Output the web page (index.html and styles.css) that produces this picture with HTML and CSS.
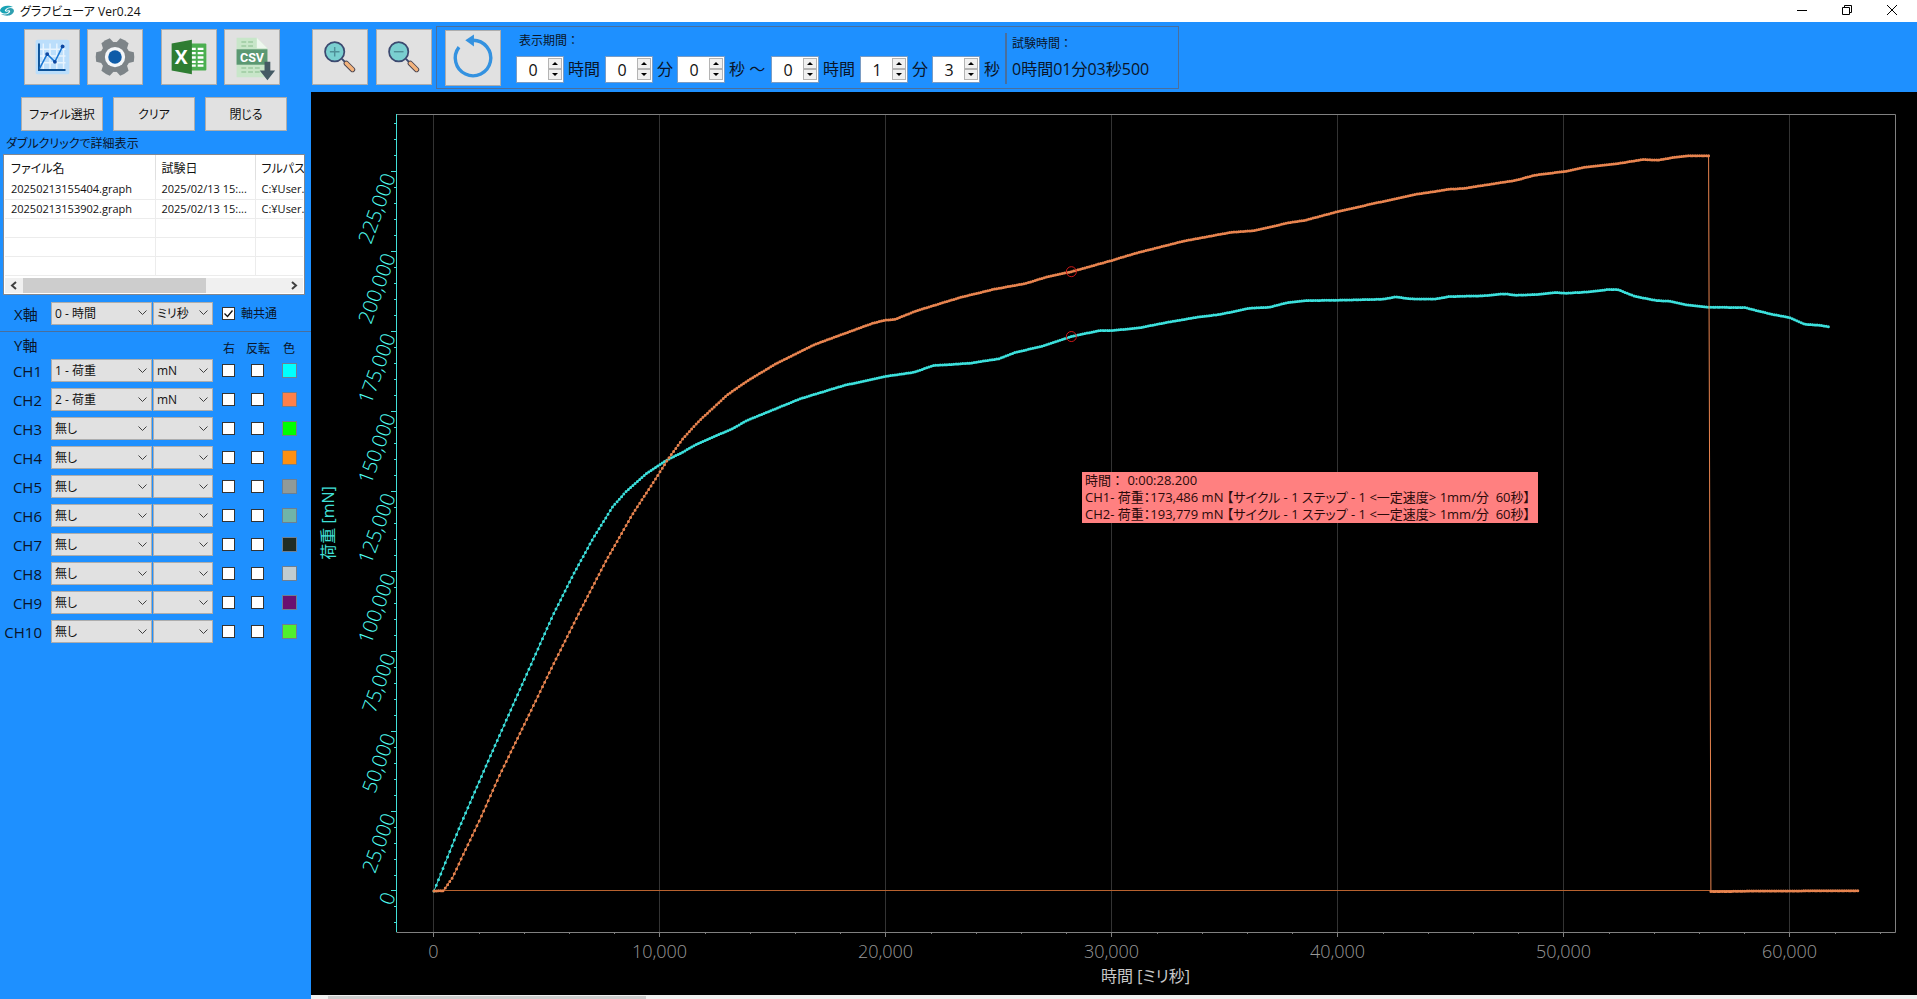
FILE: index.html
```html
<!DOCTYPE html>
<html lang="ja">
<head>
    <meta charset="UTF-8">
    <meta name="viewport" content="width=device-width, initial-scale=1.0">
    <title>グラフビューア Ver0.24</title>
    <link rel="stylesheet" href="styles.css">
</head>
<body>
    <header class="titlebar">
        <svg class="logo" viewBox="0 0 15 12" width="15" height="12">
            <path d="M0 5 C2 0 9 0 13 2 C9 2 6 3 5 5 C4 7 8 7 9 6 C8 10 0 9 0 5Z" fill="#1aa3b5"/>
            <path d="M14 6 C13 11 6 12 1 9 C6 10 9 9 10 7 C11 5 8 5 6 6 C7 2 14 2 14 6Z" fill="#2f9fb0"/>
        </svg>
        <span class="app-name">グラフビューア Ver0.24</span>
        <div class="window-controls">
            <button aria-label="最小化"><svg viewBox="0 0 10 10" width="10" height="10"><path d="M0 5.5H10"/></svg></button>
            <button aria-label="元に戻す"><svg viewBox="0 0 10 10" width="10" height="10"><path d="M.5 2.5H7.5V9.5H.5Z M2.5 2.5V.5H9.5V7.5H7.5"/></svg></button>
            <button aria-label="閉じる"><svg viewBox="0 0 10 10" width="10" height="10"><path d="M0 0L10 10M10 0L0 10"/></svg></button>
        </div>
    </header>

    <div class="app">
        <aside class="sidebar">
            <div class="icon-row">
                <button class="icon-btn" aria-label="グラフ">
                    <svg viewBox="0 0 56 56">
                        <rect x="11" y="10" width="35" height="36" rx="2" fill="#bbdefb"/>
                        <path d="M19 14V41M26 14V41M33 14V41M40 14V41M15 20H42M15 27H42M15 34H42" stroke="#e8f4fe" stroke-width="1.5" fill="none"/>
                        <path d="M14.5 14V41.5H42" stroke="#0d5298" stroke-width="2" fill="none"/>
                        <path d="M15 40L23 25L31 33L39 17" stroke="#1976d2" stroke-width="1.6" fill="none"/>
                        <circle cx="23" cy="25" r="2" fill="#0d47a1"/>
                        <circle cx="31" cy="33" r="2" fill="#0d47a1"/>
                        <circle cx="39" cy="17" r="2" fill="#0d47a1"/>
                    </svg>
                </button>
                <button class="icon-btn" aria-label="設定">
                    <svg viewBox="0 0 56 56">
                        <g fill="#7d8488">
                            <circle cx="28" cy="28" r="15.5"/>
                            <path id="tooth" d="M21 17L23 8.5Q28 7.5 33 8.5L35 17Z" transform="rotate(30 28 28)"/>
                            <use href="#tooth" transform="rotate(60 28 28)"/>
                            <use href="#tooth" transform="rotate(120 28 28)"/>
                            <use href="#tooth" transform="rotate(180 28 28)"/>
                            <use href="#tooth" transform="rotate(240 28 28)"/>
                            <use href="#tooth" transform="rotate(300 28 28)"/>
                        </g>
                        <circle cx="28" cy="28" r="10.5" fill="#f4f6f8"/>
                        <circle cx="28" cy="28" r="7" fill="#0f5ca8"/>
                    </svg>
                </button>
                <button class="icon-btn group-start" aria-label="Excel出力">
                    <svg viewBox="0 0 56 56">
                        <rect x="30" y="14" width="16" height="28" rx="1" fill="#4caf50"/>
                        <path d="M30 19.5H35M37 19.5H43M30 24H35M37 24H43M30 28.5H35M37 28.5H43M30 33H35M37 33H43M30 37H35M37 37H43" stroke="#fff" stroke-width="2.4"/>
                        <path d="M10 14L31 10V46L10 42Z" fill="#2e7d32"/>
                        <text x="20" y="35" class="icon-x">X</text>
                    </svg>
                </button>
                <button class="icon-btn" aria-label="CSV出力">
                    <svg viewBox="0 0 56 56">
                        <path d="M12 8H33L44 19V49H12Z" fill="#c8e6c9"/>
                        <path d="M33 8L44 19H33Z" fill="#eef7ee"/>
                        <path d="M17 12.5H30M17 16.5H30M17 39.5H36M17 43.5H36" stroke="#9ccaa0" stroke-width="1.5" stroke-dasharray="5 2"/>
                        <rect x="12" y="20" width="32" height="16" fill="#5b9872"/>
                        <text x="28" y="33" class="icon-csv">CSV</text>
                        <path d="M41 33H47V42H52L44 52L36 42H41Z" fill="#455a64"/>
                    </svg>
                </button>
            </div>

            <div class="file-row">
                <button class="btn">ファイル選択</button>
                <button class="btn">クリア</button>
                <button class="btn">閉じる</button>
            </div>
            <p class="hint">ダブルクリックで詳細表示</p>

            <div class="file-list">
                <table>
                    <thead>
                        <tr><th class="col-name">ファイル名</th><th class="col-date">試験日</th><th class="col-path">フルパス</th></tr>
                    </thead>
                    <tbody>
                        <tr><td>20250213155404.graph</td><td>2025/02/13 15:...</td><td>C:¥User..</td></tr>
                        <tr><td>20250213153902.graph</td><td>2025/02/13 15:...</td><td>C:¥User..</td></tr>
                        <tr><td></td><td></td><td></td></tr>
                        <tr><td></td><td></td><td></td></tr>
                        <tr><td></td><td></td><td></td></tr>
                    </tbody>
                </table>
                <div class="list-scroll">
                    <svg viewBox="0 0 18 15" width="18" height="15"><path d="M11 4L7 7.5L11 11"/></svg>
                    <div class="list-track"><div class="list-thumb"></div></div>
                    <svg viewBox="0 0 18 15" width="18" height="15"><path d="M7 4L11 7.5L7 11"/></svg>
                </div>
            </div>

            <div class="axis-grid x-axis">
                <label class="axis-name" for="xItem">X軸</label>
                <select class="item" id="xItem"><option>0 - 時間</option></select>
                <select class="unit" aria-label="X軸単位"><option>ミリ秒</option></select>
                <label class="shared"><input type="checkbox" checked>軸共通</label>
            </div>

            <div class="axis-grid y-head">
                <span class="axis-name">Y軸</span>
                <span class="col-label right-col">右</span>
                <span class="col-label">反転</span>
                <span class="col-label">色</span>
            </div>
            <div id="channels"></div>
        </aside>

        <main class="content">
            <div class="toolbar">
                <button class="icon-btn" aria-label="拡大">
                    <svg viewBox="0 0 56 56">
                        <circle cx="22.5" cy="22.5" r="10" fill="#7acfd0" stroke="#3c4a70" stroke-width="1.8"/>
                        <path d="M22.5 17.5V27.5M17.5 22.5H27.5" stroke="#4f8f98" stroke-width="1.5"/>
                        <path d="M30 30L34 34" stroke="#3c4a70" stroke-width="2"/>
                        <path d="M34.5 34.5L41 41" stroke="#4a4450" stroke-width="5.5" stroke-linecap="round"/>
                        <path d="M34.5 34.5L41 41" stroke="#f3b37c" stroke-width="3.6" stroke-linecap="round"/>
                    </svg>
                </button>
                <button class="icon-btn" aria-label="縮小">
                    <svg viewBox="0 0 56 56">
                        <circle cx="22.5" cy="22.5" r="10" fill="#7acfd0" stroke="#3c4a70" stroke-width="1.8"/>
                        <path d="M17.5 22.5H27.5" stroke="#4f8f98" stroke-width="1.5"/>
                        <path d="M30 30L34 34" stroke="#3c4a70" stroke-width="2"/>
                        <path d="M34.5 34.5L41 41" stroke="#4a4450" stroke-width="5.5" stroke-linecap="round"/>
                        <path d="M34.5 34.5L41 41" stroke="#f3b37c" stroke-width="3.6" stroke-linecap="round"/>
                    </svg>
                </button>
                <div class="range-box">
                    <button class="icon-btn" aria-label="更新">
                        <svg viewBox="0 0 56 56">
                            <path d="M13.5 16.7A18.4 18.4 0 1 0 28 9.6" stroke="#3492e0" stroke-width="3.5" fill="none"/>
                            <path d="M20 9.6L29 3.5V16Z" fill="#3492e0"/>
                        </svg>
                    </button>
                    <div class="period">
                        <div class="caption">表示期間：</div>
                        <div class="period-row" id="periodRow"></div>
                    </div>
                    <div class="test-time">
                        <div class="caption">試験時間：</div>
                        <div class="value">0時間01分03秒500</div>
                    </div>
                </div>
            </div>

            <div class="chart">
                <svg id="plot"></svg>
                <div class="tooltip">
                    <div class="wide">時間： 0:00:28.200</div>
                    <div>CH1- 荷重：173,486 mN 【サイクル - 1 ステップ - 1 &lt;一定速度&gt; 1mm/分&nbsp; 60秒】</div>
                    <div>CH2- 荷重：193,779 mN 【サイクル - 1 ステップ - 1 &lt;一定速度&gt; 1mm/分&nbsp; 60秒】</div>
                </div>
            </div>
            <div class="bottom-scroll"><div class="bottom-thumb"></div></div>
        </main>
    </div>

    <script src="script.js"></script>
</body>
</html>
```
FILE: styles.css
```css
* {
    box-sizing: border-box;
}
body {
    font-family: "Open Sans", "Noto Sans CJK JP", sans-serif;
    font-feature-settings: "palt";
    font-size: 12px;
    color: #0a1428;
    margin: 0;
    height: 100vh;
    display: flex;
    flex-direction: column;
    overflow: hidden;
}
button, input, select {
    font: inherit;
    font-feature-settings: inherit;
    color: #111;
    margin: 0;
    padding: 0;
}

/* Title bar */
.titlebar {
    display: flex;
    align-items: center;
    height: 22px;
    background: #fff;
    color: #111;
}
.app-name {
    margin-left: 5px;
}
.window-controls {
    display: flex;
    margin-left: auto;
    padding: 0 3px 2px 0;
}
.window-controls button {
    display: flex;
    align-items: center;
    justify-content: center;
    width: 45px;
    height: 20px;
    border: none;
    background: none;
}
.window-controls path {
    fill: none;
    stroke: #000;
}

.app {
    flex: 1;
    min-height: 0;
    display: grid;
    grid-template-columns: 311px 1fr;
    background: #1e90ff;
}

/* Buttons */
.icon-btn, .btn {
    background: #e1e1e1;
    border: 1px solid #adadad;
}
.icon-btn {
    flex: none;
    width: 56px;
    height: 56px;
}
.icon-btn svg {
    display: block;
    width: 54px;
    height: 54px;
}
.icon-x, .icon-csv {
    fill: #fff;
    font-family: "Open Sans", sans-serif;
    font-weight: bold;
    text-anchor: middle;
}
.icon-x {
    font-size: 20px;
}
.icon-csv {
    font-family: Roboto, sans-serif;
    font-size: 13px;
}

/* Sidebar */
.icon-row {
    display: flex;
    gap: 7px;
    padding: 7px 0 0 24px;
}
.group-start {
    margin-left: 11px;
}
.file-row {
    display: flex;
    gap: 10px;
    padding: 12px 0 0 21px;
}
.btn {
    width: 82px;
    height: 34px;
}
.hint {
    margin: 0;
    padding: 4px 6px 1px;
    line-height: 18px;
}
.file-list {
    width: 302px;
    height: 141px;
    margin-left: 3px;
    padding: 0 1px 1px;
    background: #fff;
    border: 1px solid #828790;
    overflow: hidden;
    display: flex;
    flex-direction: column;
}
.file-list table {
    width: 298px;
    table-layout: fixed;
    border-collapse: collapse;
    color: #111;
}
.file-list th {
    height: 25px;
    padding: 0 0 0 6px;
    text-align: left;
    font-weight: normal;
    white-space: nowrap;
    border-right: 1px solid #e0e0e0;
}
.file-list td {
    height: 19px;
    padding: 0 0 0 6px;
    font-size: 11px;
    line-height: 18px;
    white-space: nowrap;
    border-right: 1px solid #ececec;
    border-bottom: 1px solid #ececec;
}
.file-list th:last-child, .file-list td:last-child {
    border-right: none;
}
.col-name {
    width: 150px;
}
.col-date {
    width: 100px;
}
.list-scroll {
    display: flex;
    height: 15px;
    margin-top: auto;
    background: #f0f0f0;
}
.list-scroll path {
    fill: none;
    stroke: #404040;
    stroke-width: 2;
}
.list-track {
    flex: 1;
}
.list-thumb {
    width: 70%;
    height: 15px;
    background: #cdcdcd;
}

/* Axis settings */
.axis-grid {
    display: grid;
    grid-template-columns: 51px 102px 69px 29px 31px 15px;
    align-items: center;
    height: 29px;
}
.axis-name {
    padding-left: 14px;
    font-size: 15px;
    white-space: nowrap;
}
.x-axis {
    height: 37px;
    border-bottom: 1px solid #4a6f9c;
}
.y-head {
    height: 24px;
}
.col-label {
    justify-self: start;
    align-self: end;
    line-height: 14px;
    white-space: nowrap;
    width: 24px;
    margin-left: -5px;
    text-align: center;
}
.right-col {
    grid-column: 4;
}
.ch-name {
    padding-right: 9px;
    font-size: 15px;
    text-align: right;
}
select {
    appearance: none;
    height: 23px;
    padding: 0 3px;
    border: 1px solid #adadad;
    border-radius: 0;
    background: #e1e1e1 url("data:image/svg+xml,%3Csvg xmlns='http://www.w3.org/2000/svg' width='9' height='6'%3E%3Cpath d='M.5 .5L4.5 4.5L8.5 .5' fill='none' stroke='%23404040'/%3E%3C/svg%3E") no-repeat right 4px center;
}
.item {
    width: 101px;
}
.unit {
    width: 60px;
}
input[type="checkbox"] {
    appearance: none;
    flex: none;
    width: 13px;
    height: 13px;
    border: 1px solid #333;
    background: #fff;
}
input[type="checkbox"]:checked {
    background: #fff url("data:image/svg+xml,%3Csvg xmlns='http://www.w3.org/2000/svg' width='11' height='11'%3E%3Cpath d='M1.5 5.5L4.5 8.5L9.5 2.5' fill='none' stroke='%23111' stroke-width='1.3'/%3E%3C/svg%3E") no-repeat center;
}
.shared {
    display: flex;
    align-items: center;
    gap: 6px;
    white-space: nowrap;
}
.swatch {
    width: 15px;
    height: 15px;
    border: 1px solid #6d7f92;
}

/* Toolbar */
.content {
    display: flex;
    flex-direction: column;
    min-width: 0;
    min-height: 0;
}
.toolbar {
    display: flex;
    height: 70px;
    padding-left: 1px;
}
.toolbar > .icon-btn {
    margin: 7px 8px 0 0;
}
.range-box {
    display: flex;
    width: 743px;
    height: 63px;
    margin: 4px 0 0 -4px;
    padding: 3px 0 0 8px;
    border: 1px solid #4a6f9c;
}
.period {
    margin-left: 15px;
}
.caption {
    height: 20px;
    padding: 2px 0 0 3px;
    line-height: 18px;
    font-feature-settings: normal;
}
.period-row {
    display: flex;
    align-items: center;
    margin-top: 6px;
    font-size: 16px;
}
.spin {
    display: flex;
    width: 48px;
    height: 27px;
    padding: 1px;
    background: #fff;
    border: 1px solid #7a9cc4;
}
.spin input {
    appearance: textfield;
    width: 30px;
    border: none;
    background: none;
    text-align: center;
}
.spin input::-webkit-inner-spin-button {
    display: none;
}
.spin-btns {
    display: flex;
    flex-direction: column;
}
.spin-btns button {
    display: flex;
    align-items: center;
    justify-content: center;
    width: 14px;
    height: 11px;
    border: 1px solid #b4b4b4;
    background: #f0f0f0;
}
.spin-unit {
    padding-left: 4px;
    line-height: 27px;
    white-space: pre;
}
.unit-hour {
    width: 41px;
}
.unit-min {
    width: 24px;
}
.unit-to {
    width: 46px;
}
.unit-sec {
    width: 25px;
}
.test-time {
    height: 51px;
    margin-top: 3px;
    padding-left: 2px;
    border-left: 2px solid #4a6f9c;
}
.test-time .value {
    padding-left: 3px;
    margin-top: 3px;
    font-size: 16px;
    line-height: 27px;
}

/* Chart */
.chart {
    position: relative;
    flex: 1;
    min-height: 0;
    background: #000;
    overflow: hidden;
}
#plot {
    display: block;
    width: 100%;
    height: 100%;
}
#plot path {
    fill: none;
}
.frame, .x-tick {
    stroke: #808080;
}
.y-tick {
    stroke: #40e0d8;
}
.grid-line {
    stroke: #333;
}
.x-label {
    font-size: 18px;
    font-weight: 300;
    fill: #999;
    text-anchor: middle;
}
.y-label {
    font-size: 20px;
    font-weight: 300;
    fill: #50fff4;
    text-anchor: end;
}
.x-title, .y-title {
    font-size: 16px;
    text-anchor: middle;
}
.x-title {
    fill: #c8c8c8;
}
.y-title {
    fill: #40e0d8;
}
.marker {
    fill: none;
    stroke: #d01818;
}
.tooltip {
    position: absolute;
    left: 771px;
    top: 380px;
    padding: 0 8px 0 3px;
    background: #ff8080;
    color: #2a0a0a;
    font-size: 13px;
    line-height: 17px;
    white-space: nowrap;
}
.wide {
    font-feature-settings: normal;
}
.bottom-scroll {
    height: 4px;
    padding: 1px 0 0 17px;
    background: #f0f0f0;
}
.bottom-thumb {
    width: 20%;
    height: 3px;
    background: #cdcdcd;
}
```
FILE: script.js
```js
const channels = [
    { item: '1 - 荷重', unit: 'mN', color: '#00ffff' },
    { item: '2 - 荷重', unit: 'mN', color: '#ff8048' },
    { item: '無し', unit: '', color: '#00ff00' },
    { item: '無し', unit: '', color: '#ff9010' },
    { item: '無し', unit: '', color: '#909a98' },
    { item: '無し', unit: '', color: '#70b4a8' },
    { item: '無し', unit: '', color: '#202c24' },
    { item: '無し', unit: '', color: '#c0ccd0' },
    { item: '無し', unit: '', color: '#6a1070' },
    { item: '無し', unit: '', color: '#50f030' }
];

const periods = [
    { value: 0, label: '時間', cls: 'unit-hour' },
    { value: 0, label: '分', cls: 'unit-min' },
    { value: 0, label: '秒 ～', cls: 'unit-to' },
    { value: 0, label: '時間', cls: 'unit-hour' },
    { value: 1, label: '分', cls: 'unit-min' },
    { value: 3, label: '秒', cls: 'unit-sec' }
];

// [ミリ秒, mN]
const ch1 = [
    [0, 0], [1128, 19960], [2310, 39270], [3487, 58040], [4372, 72120], [5257, 86200],
    [6142, 98720], [7027, 110200], [7912, 120310], [8504, 125000], [9389, 130540],
    [10345, 135020], [11009, 137300], [11588, 139710], [13195, 144620], [13841, 147220],
    [16199, 154010], [18128, 158170], [19951, 160990], [21239, 162330], [22097, 164430],
    [22845, 164740], [23704, 165150], [24991, 166530], [25743, 168590], [26920, 170470],
    [28200, 173486], [29447, 175380], [30009, 175380], [31217, 176230], [32398, 177880],
    [33872, 179670], [34757, 180390], [36084, 182360], [36969, 182670], [37779, 184140],
    [38593, 184770], [39991, 184860], [41982, 185180], [42575, 185930], [43164, 185300],
    [44270, 185180], [44934, 186020], [46407, 186240], [47367, 186860], [47885, 186430],
    [48770, 186640], [49580, 187270], [50097, 187050], [51128, 187490], [51938, 188210],
    [52381, 188210], [53119, 186110], [54080, 184770], [54668, 184550], [55407, 183420],
    [56407, 182670], [57987, 182580], [58575, 181540], [59239, 180390], [59978, 179450],
    [60642, 177350], [61305, 177040], [61717, 176540]
];
const ch2 = [
    [0, 0], [420, 100], [832, 4320], [1204, 10080], [2013, 22060], [2898, 36140],
    [4080, 53350], [5257, 70560], [6438, 87240], [7619, 103410], [8797, 118030],
    [9757, 128450], [10345, 135020], [11009, 141500], [11748, 147220], [12982, 155260],
    [13841, 159510], [15124, 164960], [16841, 171000], [18128, 174350], [19416, 177660],
    [19951, 178600], [20381, 178820], [21345, 181540], [23274, 185710], [24779, 188300],
    [26172, 190090], [27137, 192180], [28200, 193779], [30031, 197380], [30996, 199470],
    [33142, 203320], [35288, 206140], [36252, 206580], [37858, 209170], [38504, 209800],
    [40004, 212610], [41504, 215020], [43460, 218020], [44934, 219590], [45522, 219810],
    [47885, 222400], [48695, 223970], [50097, 225220], [50907, 226480], [52310, 227540],
    [53487, 228890], [54150, 228670], [54743, 229420], [55478, 230050], [56400, 230050]
];
const ch2Tail = [[56500, -200], [58500, 0], [63000, 100]];

const xRange = [-1681, 64646];
const yRange = [-12829, 243117];
const margin = { left: 85, top: 22, right: 22, bottom: 63 };

function buildChannels() {
    let html = '';
    channels.forEach((ch, i) => {
        let name = 'CH' + (i + 1);
        html += `<div class="axis-grid">
            <label class="ch-name" for="item${i}">${name}</label>
            <select class="item" id="item${i}"><option>${ch.item}</option></select>
            <select class="unit" aria-label="${name} 単位"><option>${ch.unit}</option></select>
            <input type="checkbox" aria-label="${name} 右">
            <input type="checkbox" aria-label="${name} 反転">
            <button class="swatch" aria-label="${name} 色" style="background:${ch.color}"></button>
        </div>`;
    });
    document.getElementById('channels').innerHTML = html;
}

function buildPeriods() {
    let html = '';
    periods.forEach((p, i) => {
        html += `<div class="spin">
            <input type="number" id="period${i}" value="${p.value}">
            <div class="spin-btns">
                <button aria-label="増やす"><svg width="6" height="3"><path d="M0 3L3 0L6 3Z"/></svg></button>
                <button aria-label="減らす"><svg width="6" height="3"><path d="M0 0L3 3L6 0Z"/></svg></button>
            </div>
        </div><label class="spin-unit ${p.cls}" for="period${i}">${p.label}</label>`;
    });
    document.getElementById('periodRow').innerHTML = html;
}

function drawPlot() {
    let svg = document.getElementById('plot');
    let w = svg.clientWidth, h = svg.clientHeight;
    let left = margin.left, top = margin.top;
    let right = w - margin.right, bottom = h - margin.bottom;
    let sx = v => left + (v - xRange[0]) / (xRange[1] - xRange[0]) * (right - left);
    let sy = v => bottom - (v - yRange[0]) / (yRange[1] - yRange[0]) * (bottom - top);
    let crisp = v => Math.floor(v) + 0.5;
    let out = '';

    // X axis
    for (let v = 0; v <= xRange[1]; v += 2000) {
        let x = crisp(sx(v));
        let major = v % 10000 === 0;
        if (major) {
            out += `<path class="grid-line" d="M${x} ${top}V${bottom}"/>`;
            out += `<text class="x-label" x="${x}" y="${bottom + 26}">${v.toLocaleString('en-US')}</text>`;
        }
        out += `<path class="x-tick" d="M${x} ${bottom}v${major ? 5 : 2}"/>`;
    }
    out += `<path class="frame" d="M${left + 0.5} ${top + 0.5}H${right + 0.5}V${bottom + 0.5}H${left + 0.5}"/>`;

    // Y axis
    for (let v = -10000; v <= yRange[1]; v += 5000) {
        let y = crisp(sy(v));
        let major = v % 25000 === 0;
        out += `<path class="y-tick" d="M${left} ${y}h${major ? -5 : -2}"/>`;
        if (major) {
            out += `<text class="y-label" transform="translate(${left} ${y + 5}) rotate(-70)">${v.toLocaleString('en-US')}</text>`;
        }
    }
    out += `<path class="y-tick" d="M${left + 0.5} ${top}V${bottom}"/>`;

    let line = pts => 'M' + pts.map(p => sx(p[0]).toFixed(1) + ' ' + sy(p[1]).toFixed(1)).join('L');

    // one dot for every 100 ms sample
    let dots = pts => {
        let d = '';
        let k = 0;
        for (let t = pts[0][0]; t <= pts[pts.length - 1][0]; t += 100) {
            while (k < pts.length - 2 && pts[k + 1][0] < t) k++;
            let [a, b] = [pts[k], pts[k + 1]];
            let v = a[1] + (b[1] - a[1]) * (t - a[0]) / (b[0] - a[0]);
            d += `M${sx(t).toFixed(1)} ${sy(v).toFixed(1)}h0`;
        }
        return d;
    };
    let series = (pts, color) =>
        `<path d="${line(pts)}" stroke="${color}"/>` +
        `<path d="${dots(pts)}" stroke="${color}" stroke-width="3" stroke-linecap="round"/>`;

    out += series(ch1, '#3ce0dc');
    out += `<path d="M${sx(0)} ${crisp(sy(0))}H${sx(63000)}" stroke="#b8622f"/>`;
    out += series(ch2, '#e8844f');
    out += `<path d="${line([ch2[ch2.length - 1], ch2Tail[0]])}" stroke="#e8844f"/>`;
    out += series(ch2Tail, '#e8844f');

    out += `<circle class="marker" cx="${sx(28200)}" cy="${sy(173486)}" r="5"/>`;
    out += `<circle class="marker" cx="${sx(28200)}" cy="${sy(193779)}" r="5"/>`;

    out += `<text class="x-title" x="${(left + right) / 2}" y="${h - 13}">時間 [ミリ秒]</text>`;
    out += `<text class="y-title" transform="translate(23 ${(top + bottom) / 2}) rotate(-90)">荷重 [mN]</text>`;
    svg.innerHTML = out;
}

buildChannels();
buildPeriods();
drawPlot();
window.addEventListener('resize', drawPlot);
```
